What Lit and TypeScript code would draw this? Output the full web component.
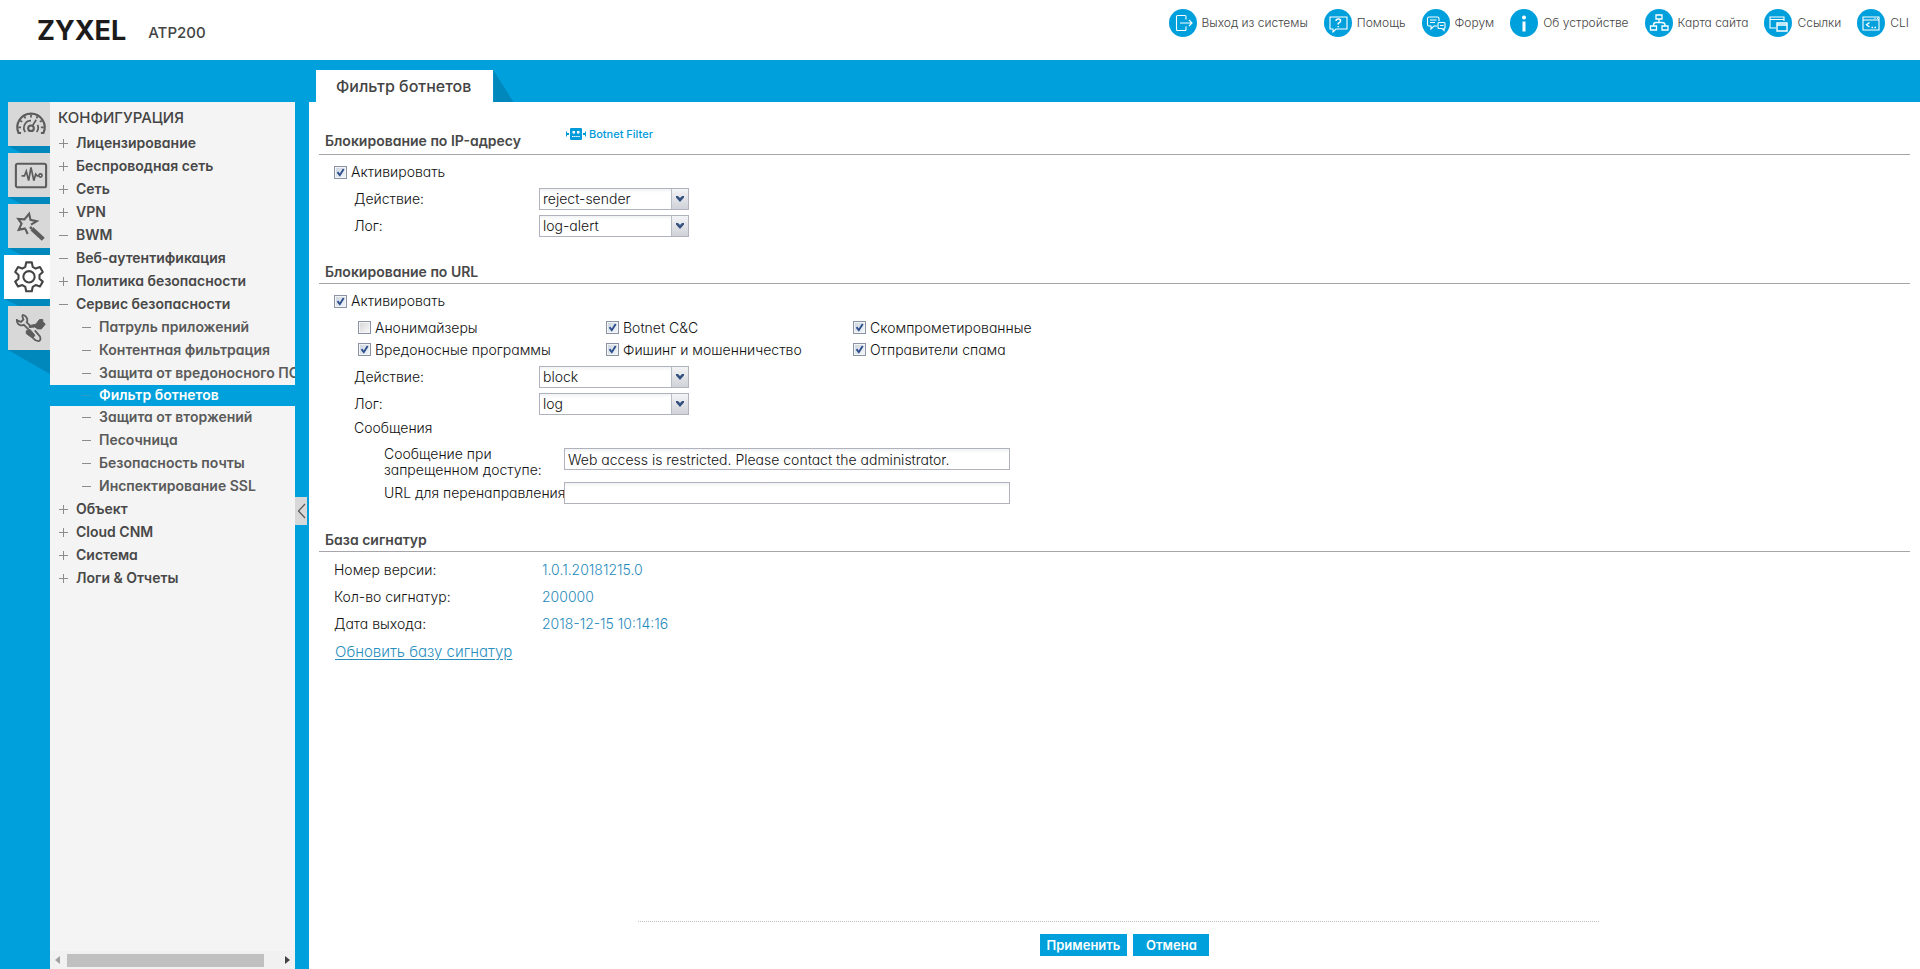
import { LitElement, html, css, svg, nothing } from "lit";
import { customElement, property, state } from "lit/decorators.js";
import { classMap } from "lit/directives/class-map.js";

interface NavItem {
  label: string;
  mark: "+" | "-";
  sub?: boolean;
}

const HEADER_LINKS = [
  {
    label: "Выход из системы",
    icon: svg`<path d="M17 10.5V7.500q0-1-1-1H8.500q-1 0-1 1v13q0 1 1 1H16q1 0 1-1V17.500M11 14h12M20 11l3 3-3 3"/>`,
  },
  {
    label: "Помощь",
    icon: svg`<path d="M6 8h17v12H12l-3 3v-3H6z"/><path d="M12 12q0-2 2.300-2t2.300 2q0 1.200-2.300 2.400v1M14.300 17v1.200" stroke-width="1.500"/>`,
  },
  {
    label: "Форум",
    icon: svg`<path d="M15 17h-3l-3 3v-3H7q-1.500 0-1.500-1.500v-6Q5.500 8 7 8h8.500Q17 8 17 9.500V12M8 11h6.500M8 13.500h5"/><path d="M17 13.500h5q1 0 1 1v4q0 1-1 1v2l-2-2h-3q-1 0-1-1v-4q0-1 1-1zM18 16.500h3.500"/>`,
  },
  {
    label: "Об устройстве",
    icon: svg`<circle cx="14" cy="8.500" r="2" fill="#fff" stroke="none"/><path d="M14 12.500v10" stroke-width="3"/>`,
  },
  {
    label: "Карта сайта",
    icon: svg`<path d="M11 6h6v4h-6zM5.500 17h6v4h-6zM17 17h6v4h-6zM14 10v3.500M8.500 17v-1q0-2.500 2.500-2.500h6q3 0 3 2.500v1" stroke-width="1.300"/>`,
  },
  {
    label: "Ссылки",
    icon: svg`<path d="M12 19H6V8h14v4M6 10.500h14"/><path d="M13 14h10v8H13zM13 16h10" stroke-width="1.400"/>`,
  },
  {
    label: "CLI",
    icon: svg`<path d="M6 8h16v13H6zM6 11h16M17.500 9.500h1M20 9.500h1"/><path d="M12.500 13.500l-3 2.200 3 2.200M14.500 18.500h1.500M17.500 18.500H19" stroke-width="1.300"/>`,
  },
];

const RAIL = [
  {
    label: "Панель",
    icon: svg`<path d="M7.500 27.500H4.800A14.500 14.500 0 1 1 31.200 27.500H28.500"/><path d="M18 8v3M11 9.800l1.200 2.200M25 9.800L23.800 12M6.500 14.500l2.200 1.200M29.500 14.500l-2.200 1.200M4.500 21.500h3M31.500 21.500h-3M12 26.500a7.500 7.500 0 0 1 6-12M24 26.500a7.500 7.500 0 0 0 1-7.500M19.500 20l4-6.500" stroke-width="1.800"/><circle cx="18" cy="22.500" r="3"/>`,
  },
  {
    label: "Мониторинг",
    icon: svg`<rect x="2" y="6" width="32" height="25" rx="2"/><path d="M8 19h3l2-5 2.500 10L18 10l3 14 2-7 1.500 2H26" stroke-width="1.800"/><circle cx="28" cy="18.500" r="1.700" stroke-width="1.800"/>`,
  },
  {
    label: "Мастер",
    icon: svg`<path d="M12.500 20.500L5 22l3-6.500L4.500 10.500l6.500.5L16 5l1.500 6.500L24 13l-6 3.500"/><path d="M12 21l2.500 5.500"/><path d="M17 19l2 2" stroke-width="2.500"/><path d="M19 21l12 11" stroke-width="4.500"/>`,
  },
  {
    label: "Конфигурация",
    icon: svg`<path d="M15 2.500h6l.9 4.700 3.200 1.900 4.500-1.600 3 5.200-3.500 3.100v4l3.500 3.100-3 5.200-4.500-1.600-3.200 1.900-.9 4.700h-6l-.9-4.700-3.200-1.900-4.500 1.600-3-5.200 3.500-3.100v-4l-3.500-3.100 3-5.200 4.500 1.600 3.200-1.900z" stroke-linejoin="round"/><circle cx="18" cy="17.800" r="6"/>`,
  },
  {
    label: "Обслуживание",
    icon: svg`<path d="M8.500 4q4.500.5 5.500 4.500.5 2-.5 3.500l4 4M3 8.500q-.5 5 3.500 6.500 2 .7 4-.3l5 5M8.500 4.500L10 9l-2.500 2.500L3 10" stroke-width="1.900"/><path d="M16 15.500l7-1.500 4-5h3.500v2l2.500 3-4 5h-4l-3-2-6 .5z" fill="currentColor" stroke-width="1"/><path d="M13 21l4-1.500 5 6-2 3.500-7-5z" fill="currentColor" stroke-width="1"/><path d="M22 20.500l5.500 6.500q1.500 4-1.500 5-3 0-5.500-3" stroke-width="1.900"/>`,
  },
];

const TREE: NavItem[] = [
  { label: "Лицензирование", mark: "+" },
  { label: "Беспроводная сеть", mark: "+" },
  { label: "Сеть", mark: "+" },
  { label: "VPN", mark: "+" },
  { label: "BWM", mark: "-" },
  { label: "Веб-аутентификация", mark: "-" },
  { label: "Политика безопасности", mark: "+" },
  { label: "Сервис безопасности", mark: "-" },
  { label: "Патруль приложений", mark: "-", sub: true },
  { label: "Контентная фильтрация", mark: "-", sub: true },
  { label: "Защита от вредоносного ПО", mark: "-", sub: true },
  { label: "Фильтр ботнетов", mark: "-", sub: true },
  { label: "Защита от вторжений", mark: "-", sub: true },
  { label: "Песочница", mark: "-", sub: true },
  { label: "Безопасность почты", mark: "-", sub: true },
  { label: "Инспектирование SSL", mark: "-", sub: true },
  { label: "Объект", mark: "+" },
  { label: "Cloud CNM", mark: "+" },
  { label: "Система", mark: "+" },
  { label: "Логи & Отчеты", mark: "+" },
];

const CATEGORIES = [
  { label: "Анонимайзеры", on: false },
  { label: "Botnet C&C", on: true },
  { label: "Скомпрометированные", on: true },
  { label: "Вредоносные программы", on: true },
  { label: "Фишинг и мошенничество", on: true },
  { label: "Отправители спама", on: true },
];

const SIGNATURE = [
  ["Номер версии:", "1.0.1.20181215.0"],
  ["Кол-во сигнатур:", "200000"],
  ["Дата выхода:", "2018-12-15 10:14:16"],
];

@customElement("zy-header")
class ZyHeader extends LitElement {
  static styles = css`
    :host {
      display: flex;
      align-items: center;
      height: 60px;
      background: #fff;
      padding: 0 11px 0 37px;
    }
    .brand {
      padding-top: 2px;
      font-size: 27px;
      font-weight: 700;
      line-height: 32px;
      color: #1c1a1a;
    }
    .model {
      margin-left: 22px;
      padding-top: 5px;
      font-size: 15px;
      font-weight: 500;
      color: #444;
    }
    .links {
      display: flex;
      gap: 16px;
      margin-left: auto;
      padding-bottom: 14px;
    }
    .link {
      display: flex;
      align-items: center;
      gap: 5px;
      font-size: 12px;
      font-weight: 300;
      color: #444;
      text-decoration: none;
      white-space: nowrap;
    }
    .name {
      padding-bottom: 2px;
    }
    .icon {
      width: 28px;
      height: 28px;
      flex: none;
    }
  `;
  render() {
    return html`
      <span class="brand">ZYXEL</span>
      <span class="model">ATP200</span>
      <nav class="links">
        ${HEADER_LINKS.map(
          (l) => html`<a class="link" href="#">
            <svg class="icon" viewBox="0 0 28 28" fill="none" stroke="#fff" stroke-width="1.1" aria-hidden="true">
              <circle cx="14" cy="14" r="14" fill="#00a0dc" stroke="none"/>${l.icon}
            </svg>
            <span class="name">${l.label}</span>
          </a>`
        )}
      </nav>
    `;
  }
}

@customElement("zy-sidebar")
class ZySidebar extends LitElement {
  @state() private current = "Фильтр ботнетов";
  static styles = css`
    :host {
      display: flex;
      padding-top: 42px;
      position: relative;
      box-sizing: border-box;
    }
    .rail {
      width: 50px;
      flex: none;
      display: flex;
      flex-direction: column;
      align-items: flex-end;
    }
    .tile {
      width: 42px;
      height: 44px;
      padding: 0 0 0 3px;
      border: 0;
      background: #d8d8d8;
      color: #5c5c5c;
      display: flex;
      align-items: center;
      justify-content: center;
    }
    .tile.active {
      width: 46px;
      background: #fff;
      color: #444;
    }
    .tile svg {
      width: 34px;
      height: 34px;
    }
    .shade {
      width: 42px;
      height: 7px;
      background: #0088bd;
      clip-path: polygon(0 0, 100% 0, 100% 100%, 32% 100%);
    }
    .shade.wide {
      width: 46px;
    }
    .shade.last {
      height: 24px;
      clip-path: polygon(0 0, 100% 0, 100% 100%);
    }
    .panel {
      width: 245px;
      flex: none;
      display: flex;
      flex-direction: column;
      background: #f4f4f4;
      overflow: hidden;
    }
    .title {
      margin: 0;
      padding: 5px 8px 3px;
      font-size: 15px;
      font-weight: 500;
      line-height: 22px;
      color: #444;
    }
    .tree {
      list-style: none;
      margin: 0;
      padding: 0;
    }
    .item {
      display: flex;
      align-items: center;
      gap: 8px;
      height: 23px;
      padding-left: 9px;
      font-size: 14px;
      font-weight: 600;
      color: #484848;
      text-decoration: none;
      white-space: nowrap;
    }
    .item.sub {
      padding-left: 32px;
      color: #5a5a5a;
    }
    .item.selected {
      height: 21px;
      background: #00a0dc;
      color: #fff;
    }
    .name {
      padding-bottom: 2px;
    }
    .mark {
      width: 9px;
      height: 9px;
      flex: none;
      stroke: #8c8c8c;
    }
    .selected .mark {
      stroke: #2f9cc4;
    }
    .scroll {
      margin-top: auto;
      height: 18px;
      display: flex;
      align-items: center;
      justify-content: space-between;
      padding: 0 5px;
      background: #f1f1f1;
    }
    .bar {
      height: 13px;
      flex: 1;
      margin: 0 21px 0 7px;
      background: #c0c0c0;
    }
    .arrow {
      width: 5px;
      height: 8px;
    }
    .gutter {
      width: 14px;
      flex: none;
    }
    .fold {
      position: absolute;
      right: 2px;
      top: 437px;
      width: 12px;
      height: 28px;
      padding: 0;
      border: 0;
      background: #d8d8d8;
      display: flex;
      align-items: center;
      justify-content: center;
    }
    .fold svg {
      width: 9px;
      height: 16px;
    }
  `;
  private pick(e: Event, label: string) {
    e.preventDefault();
    this.current = label;
  }
  render() {
    return html`
      <nav class="rail" aria-label="Разделы">
        ${RAIL.map((r, i) => {
          const active = i === 3;
          return html`<button class=${classMap({ tile: true, active })} aria-label=${r.label}>
              <svg viewBox="0 0 36 36" fill="none" stroke="currentColor" stroke-width="2.2">${r.icon}</svg>
            </button>
            <div class=${classMap({ shade: true, wide: active, last: i === RAIL.length - 1 })}></div>`;
        })}
      </nav>
      <div class="panel">
        <h2 class="title">КОНФИГУРАЦИЯ</h2>
        <ul class="tree">
          ${TREE.map(
            (t) => html`<li>
              <a
                href="#"
                class=${classMap({ item: true, sub: !!t.sub, selected: t.label === this.current })}
                @click=${(e: Event) => this.pick(e, t.label)}
              >
                <svg class="mark" viewBox="0 0 9 9" aria-hidden="true">
                  <path d=${t.mark === "+" ? "M0 4.5h9M4.500 0v9" : "M0 4.500h9"} />
                </svg>
                <span class="name">${t.label}</span>
              </a>
            </li>`
          )}
        </ul>
        <div class="scroll" aria-hidden="true">
          <svg class="arrow" viewBox="0 0 5 8"><path d="M5 0v8L0 4z" fill="#a0a0a0" /></svg>
          <div class="bar"></div>
          <svg class="arrow" viewBox="0 0 5 8"><path d="M0 0v8l5-4z" fill="#444" /></svg>
        </div>
      </div>
      <div class="gutter"></div>
      <button class="fold" aria-label="Свернуть">
        <svg viewBox="0 0 9 16" fill="none" stroke="#555" stroke-width="1.2"><path d="M8 1L1.500 8 8 15" /></svg>
      </button>
    `;
  }
}

@customElement("zy-check")
class ZyCheck extends LitElement {
  @property() label = "";
  @property({ type: Boolean }) on = false;
  static styles = css`
    :host {
      display: block;
    }
    .check {
      display: inline-flex;
      align-items: center;
      gap: 4px;
      font-size: 14px;
      line-height: 18px;
      white-space: nowrap;
    }
    .box {
      appearance: none;
      width: 13px;
      height: 13px;
      margin: 0;
      border: 1px solid #8a94a4;
      background: linear-gradient(135deg, #d4d4d4, #fafafa);
      box-shadow: inset 0 0 0 1px #f4f4f4;
    }
    .box:checked {
      background:
        url("data:image/svg+xml,%3Csvg xmlns='http://www.w3.org/2000/svg' viewBox='0 0 11 11'%3E%3Cpath d='M2.500 5.200l2.300 3L8.700 2' fill='none' stroke='%232f4f8c' stroke-width='1.900'/%3E%3C/svg%3E"),
        linear-gradient(135deg, #c9d3de, #f4f8fb);
    }
  `;
  render() {
    return html`<label class="check"><input class="box" type="checkbox" .checked=${this.on} />${this.label}</label>`;
  }
}

@customElement("zy-select")
class ZySelect extends LitElement {
  @property() label = "";
  @property({ type: Array }) options: string[] = [];
  static styles = css`
    :host {
      display: grid;
      grid-template-columns: 185px 150px;
      align-items: center;
      height: 27px;
      padding-left: 35px;
      font-size: 14px;
    }
    .field {
      display: grid;
      grid-template-columns: 1fr 17px;
      align-items: center;
    }
    .select {
      grid-area: 1 / 1 / 2 / 3;
      appearance: none;
      box-sizing: border-box;
      width: 100%;
      height: 22px;
      margin: 0;
      padding: 0 20px 1px 3px;
      border: 1px solid #b0b3bd;
      border-radius: 0;
      font: inherit;
      font-feature-settings: inherit;
      color: #111;
      background:
        linear-gradient(#b8bcc6, #b8bcc6) right 16px top / 1px 100% no-repeat,
        linear-gradient(#f3f4f6, #cfd2d8) right top / 16px 100% no-repeat,
        linear-gradient(#f1f2f4, #fff 4px);
    }
    .chevron {
      grid-area: 1 / 2 / 2 / 3;
      z-index: 1;
      width: 8px;
      height: 6px;
      margin-left: 4px;
      pointer-events: none;
    }
  `;
  render() {
    return html`
      <label for="s">${this.label}</label>
      <div class="field">
        <select class="select" id="s">
          ${this.options.map((o) => html`<option>${o}</option>`)}
        </select>
        <svg class="chevron" viewBox="0 0 8 6" aria-hidden="true">
          <path d="M0 0h2l2 2 2-2h2v1.500L4 6 0 1.500z" fill="#34507e" />
        </svg>
      </div>
    `;
  }
}

@customElement("zy-section")
class ZySection extends LitElement {
  @property() heading = "";
  @property({ type: Boolean }) badge = false;
  static styles = css`
    :host {
      display: block;
      padding: 0 10px;
    }
    .head {
      display: grid;
      grid-template-columns: 241px auto 1fr;
      align-items: end;
      height: 44px;
      padding-left: 6px;
      border-bottom: 1px solid #a6a6aa;
    }
    .head.first {
      height: 52px;
    }
    .heading {
      margin: 0;
      padding-bottom: 2px;
      font-size: 14px;
      font-weight: 600;
      line-height: 18px;
      color: #484848;
      white-space: nowrap;
    }
    .first .heading {
      padding-bottom: 4px;
    }
    .badge {
      display: flex;
      align-items: center;
      gap: 3px;
      padding-bottom: 11px;
      font-size: 11px;
      font-weight: 500;
      line-height: 18px;
      color: #009ad8;
      text-decoration: none;
    }
    .badge svg {
      width: 20px;
      height: 12px;
    }
    .body {
      padding: 4px 0 0;
    }
  `;
  render() {
    return html`
      <div class=${classMap({ head: true, first: this.badge })}>
        <h3 class="heading">${this.heading}</h3>
        ${this.badge
          ? html`<a class="badge" href="#">
              <svg viewBox="0 0 20 12" fill="#009ad8" aria-hidden="true">
                <rect x="4" y="0" width="12" height="12" rx="1" />
                <path d="M0 3.500h1V5h2v2H1v1.500H0zM20 3.500h-1V5h-2v2h2v1.500h1z" />
                <path d="M6.500 3h2.500v2.500H6.500zM11 3h2.500v2.500H11z" fill="#fff" />
                <path d="M6 8.500h8" stroke="#fff" stroke-dasharray="1.500 .6" />
              </svg>
              <span>Botnet Filter</span>
            </a>`
          : nothing}
      </div>
      <div class="body"><slot></slot></div>
    `;
  }
}

@customElement("app-root")
class AppRoot extends LitElement {
  static styles = css`
    :host {
      display: flex;
      flex-direction: column;
      min-height: 100vh;
      background: #00a0dc;
      color: #111;
      font-family: Inter, "Noto Sans", sans-serif;
      font-size: 14px;
      font-weight: 300;
      font-feature-settings: "cv11" 1;
    }
    .main {
      display: flex;
      flex: 1;
    }
    .side {
      flex: none;
    }
    .work {
      flex: 1;
      min-width: 0;
      display: flex;
      flex-direction: column;
    }
    .tabs {
      display: flex;
      align-items: flex-end;
      height: 42px;
      padding-left: 7px;
    }
    .tab {
      height: 32px;
      padding: 0 22px 0 20px;
      border: 0;
      background: #fff;
      font: inherit;
      font-feature-settings: inherit;
      font-size: 16px;
      font-weight: 500;
      color: #444;
    }
    .fold {
      width: 20px;
      height: 32px;
      background: #0088bd;
      clip-path: polygon(0 0, 100% 100%, 0 100%);
    }
    .content {
      flex: 1;
      display: flex;
      flex-direction: column;
      background: #fff;
    }
    .enable {
      display: flex;
      align-items: center;
      height: 26px;
      padding-left: 15px;
    }
    .cats {
      display: grid;
      grid-template-columns: 248px 247px auto;
      grid-auto-rows: 22px;
      align-items: center;
      justify-content: start;
      padding: 3px 0 2px 39px;
    }
    .sub {
      padding-left: 35px;
      line-height: 22px;
    }
    .messages {
      display: grid;
      grid-template-columns: 180px 446px;
      row-gap: 4px;
      padding: 7px 0 3px 65px;
      line-height: 16px;
    }
    .line {
      line-height: 22px;
      white-space: nowrap;
      overflow: hidden;
    }
    .text {
      box-sizing: border-box;
      height: 22px;
      margin: 0;
      padding: 0 3px;
      border: 1px solid #b0b3bd;
      background: linear-gradient(#f1f2f4, #fff 4px);
      font: inherit;
      font-feature-settings: inherit;
      color: #111;
    }
    .text.lower {
      margin-top: 2px;
    }
    .facts {
      display: grid;
      grid-template-columns: 208px auto;
      grid-auto-rows: 27px;
      margin: 0;
      padding-left: 15px;
      line-height: 27px;
    }
    .value {
      margin: 0;
      color: #1f8abb;
    }
    .update {
      display: inline-block;
      margin-left: 16px;
      font-size: 15px;
      line-height: 30px;
      color: #2a8fbe;
      text-underline-offset: 2px;
    }
    .bottom {
      margin-top: auto;
      padding-left: 8px;
    }
    .footer {
      box-sizing: border-box;
      width: 60%;
      margin: 0 auto;
      padding: 12px 0 13px 12px;
      border-top: 1px dotted #c4c4c4;
      display: flex;
      justify-content: center;
      gap: 6px;
    }
    .btn {
      height: 22px;
      min-width: 76px;
      padding: 0 7px;
      border: 0;
      background: #00a0dc;
      color: #fff;
      font: inherit;
      font-feature-settings: inherit;
      font-size: 13px;
      font-weight: 600;
    }
  `;
  render() {
    return html`
      <zy-header></zy-header>
      <div class="main">
        <zy-sidebar class="side"></zy-sidebar>
        <main class="work">
          <div class="tabs" role="tablist">
            <button class="tab" role="tab" aria-selected="true">Фильтр ботнетов</button>
            <div class="fold"></div>
          </div>
          <div class="content">
            <zy-section heading="Блокирование по IP-адресу" badge>
              <zy-check class="enable" label="Активировать" on></zy-check>
              <zy-select label="Действие:" .options=${["reject-sender", "reject-receiver", "reject-both", "none"]}></zy-select>
              <zy-select label="Лог:" .options=${["log-alert", "log", "no"]}></zy-select>
            </zy-section>
            <zy-section heading="Блокирование по URL">
              <zy-check class="enable" label="Активировать" on></zy-check>
              <div class="cats">
                ${CATEGORIES.map((c) => html`<zy-check label=${c.label} ?on=${c.on}></zy-check>`)}
              </div>
              <zy-select label="Действие:" .options=${["block", "warn", "pass"]}></zy-select>
              <zy-select label="Лог:" .options=${["log", "log-alert", "no"]}></zy-select>
              <div class="sub">Сообщения</div>
              <div class="messages">
                <label for="denied">Сообщение при запрещенном доступе:</label>
                <input class="text lower" id="denied" value="Web access is restricted. Please contact the administrator." />
                <label class="line" for="redirect">URL для перенаправления:</label>
                <input class="text" id="redirect" />
              </div>
            </zy-section>
            <zy-section heading="База сигнатур">
              <dl class="facts">
                ${SIGNATURE.map(([k, v]) => html`<dt>${k}</dt><dd class="value">${v}</dd>`)}
              </dl>
              <a class="update" href="#">Обновить базу сигнатур</a>
            </zy-section>
            <div class="bottom">
              <div class="footer">
                <button class="btn">Применить</button>
                <button class="btn">Отмена</button>
              </div>
            </div>
          </div>
        </main>
      </div>
    `;
  }
}
